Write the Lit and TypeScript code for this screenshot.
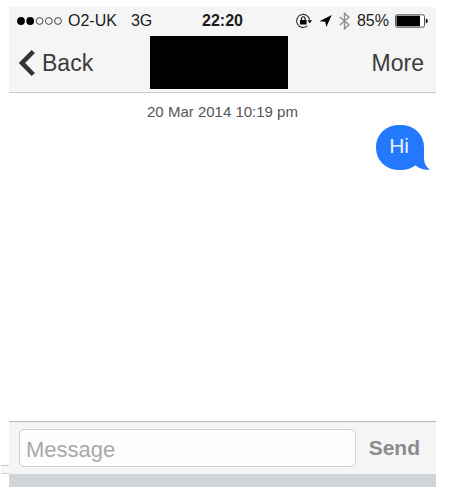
import { LitElement, html, css } from "lit";
import { customElement } from "lit/decorators.js";

@customElement("status-bar")
class StatusBar extends LitElement {
  static styles = css`
    :host {
      display: grid;
      grid-template-columns: 1fr auto 1fr;
      align-items: center;
      height: 28px;
      padding: 0 8px;
      font-size: 16px;
      color: #1c1c1c;
    }
    .side {
      display: flex;
      align-items: center;
      white-space: nowrap;
    }
    .dots {
      margin-right: 5px;
    }
    .network {
      margin-left: 14px;
    }
    .time {
      font-weight: bold;
    }
    .right {
      justify-content: flex-end;
    }
    .arrow,
    .bluetooth {
      margin-left: 7px;
    }
    .percent {
      margin: 0 6px 0 7px;
    }
    svg {
      display: block;
      flex: none;
    }
  `;

  render() {
    return html`
      <div class="side">
        <svg class="dots" width="46" height="10" viewBox="0 0 46 10" aria-label="Signal 2 of 5">
          <circle cx="4" cy="5" r="3.9" />
          <circle cx="13.2" cy="5" r="3.9" />
          <g fill="none" stroke="#333" stroke-width=".9">
            <circle cx="22.6" cy="5" r="3.4" />
            <circle cx="31.8" cy="5" r="3.4" />
            <circle cx="41" cy="5" r="3.4" />
          </g>
        </svg>
        <span>O2-UK</span>
        <span class="network">3G</span>
      </div>
      <span class="time">22:20</span>
      <div class="side right">
        <svg width="16" height="16" viewBox="0 0 16 16" aria-label="Rotation lock">
          <path d="M13.6 6.8A6.5 6.5 0 1 0 11.4 12.9" fill="none" stroke="#333" stroke-width="1.1" />
          <path d="M11.4 7.2H16l-2.300 3z" />
          <rect x="4" y="6.9" width="6.6" height="4.7" rx=".4" />
          <path d="M5.5 7V5.600a1.800 1.800 0 0 1 3.600 0V7" fill="none" stroke="#000" stroke-width="1.1" />
        </svg>
        <svg class="arrow" width="13" height="14" viewBox="0 0 13 14" aria-label="Location">
          <path d="M12.800 1 7.300 13 6.300 7.700.4 7.200z" />
        </svg>
        <svg class="bluetooth" width="11" height="18" viewBox="0 0 11 18" aria-label="Bluetooth">
          <path d="M.8 5 10 12.8 5.5 16.8V1.2L10 5.2.8 13" fill="none" stroke="#8e8e8e" stroke-width="1.4" />
        </svg>
        <span class="percent">85%</span>
        <svg width="33" height="14" viewBox="0 0 33 14" aria-label="Battery">
          <rect x=".5" y=".8" width="29" height="12.4" rx="1.8" fill="#fff" stroke="#555" />
          <rect x="1.5" y="1.8" width="23.5" height="10.4" rx=".6" />
          <path d="M30.8 4.500q2 .6 2 2.500t-2 2.500z" />
        </svg>
      </div>
    `;
  }
}

@customElement("nav-bar")
class NavBar extends LitElement {
  static styles = css`
    :host {
      display: grid;
      grid-template-columns: 1fr 138px 1fr;
      align-items: center;
      padding: 1px 12px 3px 4px;
    }
    button {
      display: flex;
      align-items: center;
      gap: 7px;
      padding: 0;
      border: 0;
      background: none;
      font: inherit;
      font-size: 23px;
      line-height: 28px;
      color: #3c3c3c;
    }
    .back {
      justify-self: start;
      padding-left: 6px;
    }
    .more {
      justify-self: end;
    }
    .contact {
      height: 53px;
      background: #000;
    }
  `;

  render() {
    return html`
      <button class="back">
        <svg width="16" height="28" viewBox="0 0 16 28" aria-hidden="true">
          <path d="M14.3 2.5 3 14 14.3 25.5" fill="none" stroke="#333" stroke-width="4.6" />
        </svg>
        Back
      </button>
      <div class="contact"></div>
      <button class="more">More</button>
    `;
  }
}

@customElement("chat-bubble")
class ChatBubble extends LitElement {
  static styles = css`
    :host {
      position: relative;
      display: block;
      padding: 9px 15px 12px 13px;
      border-radius: 22px;
      background: #2378fb;
      color: #e6f0ff;
      font-size: 21px;
      line-height: 24px;
    }
    .tail {
      position: absolute;
      right: -6px;
      bottom: 0;
    }
  `;

  render() {
    return html`
      <slot></slot>
      <svg class="tail" width="20" height="22" viewBox="0 0 20 22" aria-hidden="true">
        <path d="M14 0V11Q14.5 18.5 20 21.6 12 22.6 6.5 18L0 14V0z" fill="#2378fb" />
      </svg>
    `;
  }
}

@customElement("message-composer")
class MessageComposer extends LitElement {
  static styles = css`
    form {
      display: flex;
      align-items: center;
      padding: 7px 16px 7px 10px;
      border-top: 1px solid #b4b6b8;
      background: #f5f5f5;
    }
    input {
      box-sizing: border-box;
      flex: 1;
      min-width: 0;
      height: 38px;
      margin: 0;
      padding: 4px 6px 0;
      border: 1px solid #d2d2d4;
      border-radius: 5px;
      background: #fdfdfd;
      font: inherit;
      font-size: 22px;
      color: #333;
    }
    input::placeholder {
      color: #a9a9a9;
      opacity: 1;
    }
    button {
      margin-left: 13px;
      padding: 0;
      border: 0;
      background: none;
      font: inherit;
      font-size: 21px;
      font-weight: bold;
      color: #8c8c8c;
    }
  `;

  render() {
    return html`
      <form @submit=${(e: Event) => e.preventDefault()}>
        <input type="text" placeholder="Message" aria-label="Message" />
        <button type="submit">Send</button>
      </form>
    `;
  }
}

@customElement("app-root")
class AppRoot extends LitElement {
  static styles = css`
    :host {
      position: relative;
      box-sizing: border-box;
      display: flex;
      flex-direction: column;
      min-height: 100vh;
      padding: 7px 29px 0 9px;
      background: #fff;
      font-family: "Liberation Sans", Arial, sans-serif;
    }
    header {
      background: #f5f5f5;
      border-bottom: 1px solid #c8c9cb;
    }
    main {
      flex: 1;
      display: flex;
      flex-direction: column;
    }
    time {
      padding-top: 10px;
      text-align: center;
      font-size: 15px;
      line-height: 18px;
      color: #555;
    }
    .sent {
      align-self: flex-end;
      margin: 4px 12px 0 0;
    }
    .keyboard {
      height: 13px;
      background: #d1d5da;
    }
    .edge {
      position: absolute;
      left: 1px;
      bottom: 13px;
      width: 8px;
      height: 7px;
      border-top: 1px solid #c4c4c4;
      border-bottom: 1px solid #d4d4d4;
      background: #f8f8f8;
    }
  `;

  render() {
    return html`
      <header>
        <status-bar></status-bar>
        <nav-bar></nav-bar>
      </header>
      <main>
        <time datetime="2014-03-20T22:19">20 Mar 2014 10:19 pm</time>
        <chat-bubble class="sent">Hi</chat-bubble>
      </main>
      <message-composer></message-composer>
      <div class="keyboard"></div>
      <div class="edge"></div>
    `;
  }
}
